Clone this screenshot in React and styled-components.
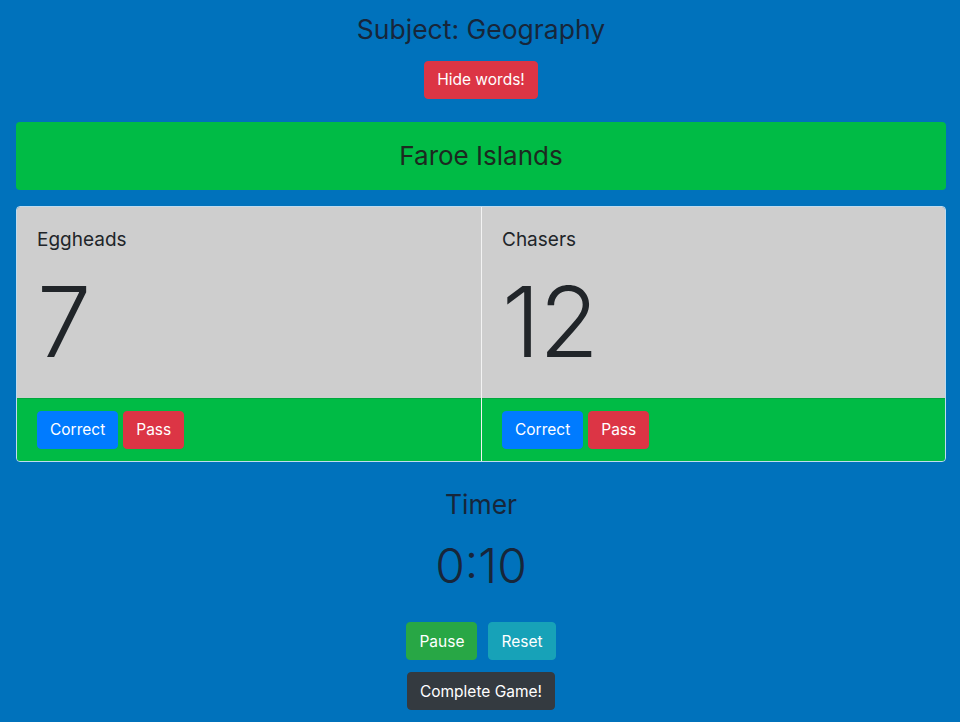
import React from "react";
import styled, { createGlobalStyle } from "styled-components";

const Global = createGlobalStyle`
  html, body { margin: 0; padding: 0; }
  body {
    background: #0072bc;
    font-family: Inter, "Noto Sans", "Liberation Sans", sans-serif;
    color: #212529;
    min-height: 722px;
  }
  * { box-sizing: border-box; }
`;

const Page = styled.div`
  padding: 0 14px 0 16px;
  display: flex;
  flex-direction: column;
  align-items: center;
`;

const Title = styled.h3`
  margin: 14px 0 0;
  font-size: 26.5px;
  font-weight: 400;
  line-height: 1.2;
  color: #17263a;
`;

const Btn = styled.button`
  font-family: inherit;
  font-size: 15.5px;
  line-height: 1.5;
  padding: 6px 12px;
  border: 1px solid ${(p) => p.$bg};
  border-radius: 4px;
  background: ${(p) => p.$bg};
  color: #fff;
  cursor: pointer;
  height: 38px;
`;

const TopBtn = styled(Btn)`
  margin-top: 15px;
`;

const WordBar = styled.div`
  align-self: stretch;
  margin-top: 23px;
  background: #00bb45;
  border-radius: 4px;
  height: 68px;
  display: flex;
  align-items: center;
  justify-content: center;
  font-size: 26px;
  color: #1c2a20;
`;

const CardGroup = styled.div`
  align-self: stretch;
  margin-top: 16px;
  display: grid;
  grid-template-columns: 1fr 1fr;
  border-radius: 4px;
  overflow: hidden;
  border: 1px solid rgba(255, 255, 255, 0.75);
`;

const Card = styled.div`
  display: flex;
  flex-direction: column;
  background: #cecece;
  border-left: ${(p) => (p.$first ? "none" : "1px solid rgba(255,255,255,0.75)")};
`;

const CardBody = styled.div`
  padding: 20px 20px 20px;
  height: 191px;
`;

const CardTitle = styled.h5`
  margin: 0 0 12px;
  font-size: 19px;
  font-weight: 400;
  line-height: 26px;
  color: #212529;
`;

const Score = styled.div`
  font-size: 97px;
  font-weight: 300;
  line-height: 113px;
  color: #212529;
  letter-spacing: -1px;
`;

const CardFooter = styled.div`
  background: #00bb45;
  border-top: 1px solid rgba(0, 0, 0, 0.1);
  padding: 12px 20px;
  display: flex;
  gap: 5px;
`;

const TimerTitle = styled.h3`
  margin: 27px 0 0;
  font-size: 26.5px;
  font-weight: 400;
  line-height: 1.2;
  color: #17263a;
`;

const TimerValue = styled.div`
  margin-top: 16px;
  font-size: 48px;
  font-weight: 300;
  line-height: 1.2;
  color: #17263a;
`;

const Row = styled.div`
  margin-top: 28px;
  display: flex;
  gap: 11px;
`;

const BottomBtn = styled(Btn)`
  margin-top: 12px;
`;

export default function App() {
  return (
    <>
      <Global />
      <Page>
        <Title>Subject: Geography</Title>
        <TopBtn $bg="#dc3545">Hide words!</TopBtn>
        <WordBar>Faroe Islands</WordBar>
        <CardGroup>
          {[
            ["Eggheads", 7],
            ["Chasers", 12],
          ].map(([name, score], i) => (
            <Card key={name} $first={i === 0}>
              <CardBody>
                <CardTitle>{name}</CardTitle>
                <Score>{score}</Score>
              </CardBody>
              <CardFooter>
                <Btn $bg="#007bff">Correct</Btn>
                <Btn $bg="#dc3545">Pass</Btn>
              </CardFooter>
            </Card>
          ))}
        </CardGroup>
        <TimerTitle>Timer</TimerTitle>
        <TimerValue>0:10</TimerValue>
        <Row>
          <Btn $bg="#28a745">Pause</Btn>
          <Btn $bg="#17a2b8">Reset</Btn>
        </Row>
        <BottomBtn $bg="#343a40">Complete Game!</BottomBtn>
      </Page>
    </>
  );
}
